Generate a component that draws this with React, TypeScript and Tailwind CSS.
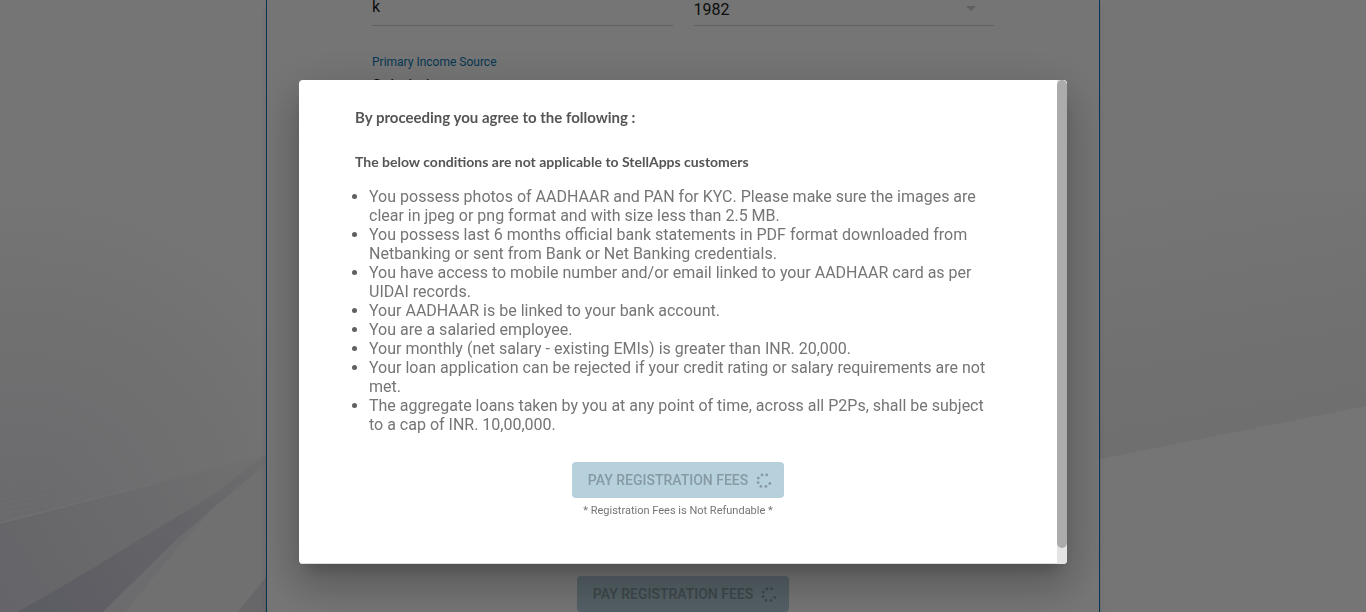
import React from "react";

const conditions = [
  "You possess photos of AADHAAR and PAN for KYC. Please make sure the images are clear in jpeg or png format and with size less than 2.5 MB.",
  "You possess last 6 months official bank statements in PDF format downloaded from Netbanking or sent from Bank or Net Banking credentials.",
  "You have access to mobile number and/or email linked to your AADHAAR card as per UIDAI records.",
  "Your AADHAAR is be linked to your bank account.",
  "You are a salaried employee.",
  "Your monthly (net salary - existing EMIs) is greater than INR. 20,000.",
  "Your loan application can be rejected if your credit rating or salary requirements are not met.",
  "The aggregate loans taken by you at any point of time, across all P2Ps, shall be subject to a cap of INR. 10,00,000.",
];

function Spinner() {
  const dots = [
    [6, 2.9], [10.7, 2.9], [2.3, 6.1], [2.1, 10.6], [4.9, 14.4], [9.9, 14.4], [13.8, 11.5],
  ];
  return (
    <svg className="size-4" viewBox="0 0 16 16" aria-hidden="true">
      {dots.map(([cx, cy]) => (
        <circle key={`${cx}-${cy}`} cx={cx} cy={cy} r="1.4" fill="currentColor" />
      ))}
    </svg>
  );
}

function PayButton() {
  return (
    <button
      type="button"
      disabled
      className="flex h-9 items-center gap-2 rounded bg-[#b6d0dc] pr-3 pl-4 text-sm font-medium text-[#869aa4]"
    >
      PAY REGISTRATION FEES
      <Spinner />
    </button>
  );
}

function Backdrop() {
  const strands = Array.from({ length: 16 }, (_, i) => i);
  return (
    <svg
      className="absolute inset-0 size-full"
      viewBox="0 0 1366 612"
      preserveAspectRatio="none"
      aria-hidden="true"
    >
      <defs>
        <radialGradient id="haze" gradientUnits="userSpaceOnUse" cx="20" cy="530" r="330">
          <stop offset="0" stopColor="#e6e3ea" />
          <stop offset="0.3" stopColor="#eeedf1" />
          <stop offset="0.6" stopColor="#f4f4f6" />
          <stop offset="1" stopColor="#fefefe" />
        </radialGradient>
        <linearGradient id="slope" gradientUnits="userSpaceOnUse" x1="0" y1="600" x2="250" y2="450">
          <stop offset="0" stopColor="#dcdce5" />
          <stop offset="0.6" stopColor="#e9e9ed" />
          <stop offset="1" stopColor="#f3f3f4" />
        </linearGradient>
        <linearGradient id="wedge" gradientUnits="userSpaceOnUse" x1="50" y1="612" x2="266" y2="455">
          <stop offset="0" stopColor="#c9c9d8" />
          <stop offset="0.6" stopColor="#dbdbe3" />
          <stop offset="1" stopColor="#eeeef0" />
        </linearGradient>
        <linearGradient id="band" gradientUnits="userSpaceOnUse" x1="1200" y1="190" x2="1245" y2="435">
          <stop offset="0" stopColor="#fefefe" />
          <stop offset="1" stopColor="#f1f1f3" />
        </linearGradient>
      </defs>
      <rect width="1366" height="612" fill="#fefefe" />
      <path d="M0 200H266V460L0 523Z" fill="url(#haze)" />
      <g fill="none" stroke="#f4f4f6" strokeWidth="0.8" opacity="0.7">
        {strands.map((i) => (
          <path
            key={i}
            d={`M0 ${444 + i * 5}Q${14 + i * 5} ${432 + i * 5} ${24 + i * 8} ${406 + i * 5}`}
          />
        ))}
      </g>
      <path d="M0 523L110 495L200 472L266 454V612H0Z" fill="url(#slope)" />
      <path d="M0 523L110 495L150 485" fill="none" stroke="#f8f8f8" strokeWidth="1" />
      <path d="M103 612L173 543L213 508L266 463V612Z" fill="#f3f3f5" />
      <path d="M17 612Q75 580 127 547L213 495L266 454V464L213 508L173 543L103 612Z" fill="url(#wedge)" />
      <path d="M103 612L173 543L213 508L180 545L125 612Z" fill="#ebebef" />
      <path d="M238 612L266 577V612Z" fill="#e0e0e8" />
      <path d="M1100 190H1366V406L1100 459Z" fill="url(#band)" />
    </svg>
  );
}

export default function App() {
  return (
    <div className="relative h-screen overflow-hidden font-[Roboto,sans-serif]">
      <Backdrop />

      <main className="relative mx-auto flex h-full max-w-[834px] flex-col border-x border-[#0070ad] bg-white px-[105px] shadow-md">
        <div className="grid grid-cols-2 gap-x-[21px]">
          <input
            aria-label="Name"
            defaultValue="k"
            className="h-[26px] w-full border-b border-[#d4d4d4] pb-3 text-base leading-3 text-[#222]"
          />
          <div className="relative h-[26px]">
            <select
              aria-label="Year"
              className="block h-full w-full appearance-none border-b border-[#d4d4d4] pb-1.5 text-base leading-4 text-[#222]"
            >
              <option>1982</option>
            </select>
            <svg
              className="absolute top-[6px] right-[18px] h-[5px] w-[10px]"
              viewBox="0 0 10 5"
              aria-hidden="true"
            >
              <path d="M0 0H10L5 5Z" fill="#cfcfcf" />
            </svg>
          </div>
          <div className="mt-7 flex flex-col">
            <label htmlFor="income" className="text-xs text-[#0b78b4]">
              Primary Income Source
            </label>
            <select
              id="income"
              className="mt-1 h-8 w-full appearance-none border-b border-[#d4d4d4] pb-2.5 text-base text-[#222]"
            >
              <option>Salaried</option>
            </select>
          </div>
        </div>
        <div className="mt-auto flex justify-center">
          <PayButton />
        </div>
      </main>

      <div className="fixed inset-0 flex items-start justify-center bg-black/54 pt-20">
        <div
          role="dialog"
          aria-modal="true"
          aria-labelledby="terms-title"
          className="flex w-full max-w-3xl overflow-hidden rounded bg-white shadow-[0_11px_15px_-7px_rgba(0,0,0,0.2),0_24px_38px_3px_rgba(0,0,0,0.14),0_9px_46px_8px_rgba(0,0,0,0.12)]"
        >
          <div className="flex-1 border-b border-[#dddddd] px-14 pt-[27px] pb-11 text-[#757575]">
            <h2
              id="terms-title"
              className="font-[Lato,sans-serif] text-[15px] leading-5 font-bold text-[#555]"
            >
              By proceeding you agree to the following :
            </h2>
            <h3 className="mt-[25px] font-[Lato,sans-serif] text-sm leading-5 font-bold text-[#555]">
              The below conditions are not applicable to StellApps customers
            </h3>
            <ul className="mt-[15px] list-disc pl-[14px] text-base leading-[19px] marker:text-[#606060]">
              {conditions.map((text) => (
                <li key={text}>{text}</li>
              ))}
            </ul>
            <div className="mt-7 flex flex-col items-center gap-[5px]">
              <PayButton />
              <p className="text-[11px] leading-4">* Registration Fees is Not Refundable *</p>
            </div>
          </div>
          <div className="w-[10px] bg-[#e4e4e4] pb-4" aria-hidden="true">
            <div className="h-full rounded-full bg-[#ababab]" />
          </div>
        </div>
      </div>
    </div>
  );
}
